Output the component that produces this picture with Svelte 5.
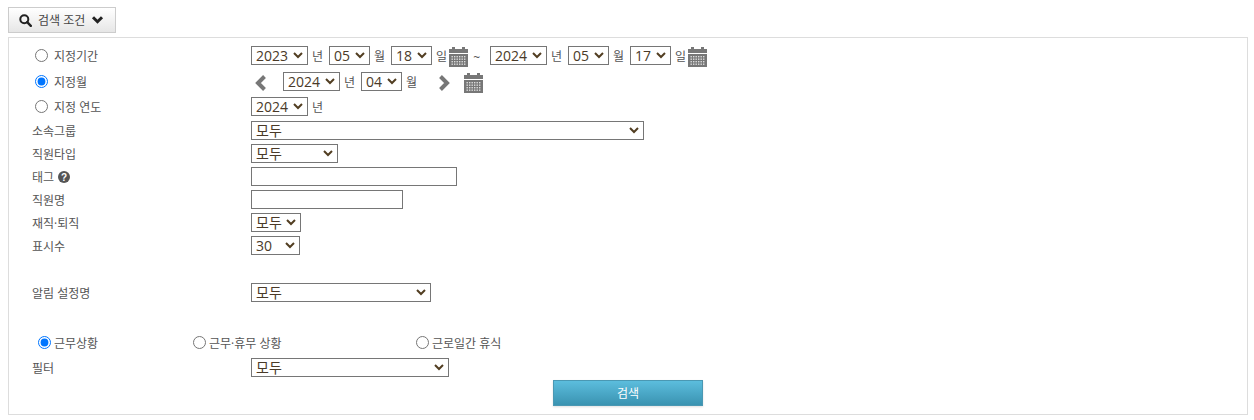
<script lang="ts">
  const years = ['2022', '2023', '2024'];
  const months = ['04', '05'];
  const filters = ['모두'];
</script>

{#snippet cal()}
  <svg class="cal" width="19" height="20" viewBox="0 0 19 20" aria-hidden="true">
    <path fill="#777" d="M0 2h3V0h3v2h7V0h3v2h3v4H0zM0 7h19v13H0z" />
    <g fill="#fff" opacity="0.75">
      {#each [9, 11.5, 14, 16.5] as y}
        {#each [2.5, 5, 7.5, 10, 12.5, 15] as x}
          <rect {x} {y} width="1.4" height="1.4" />
        {/each}
      {/each}
    </g>
  </svg>
{/snippet}

{#snippet dateSel(value: string, options: string[], cls: string)}
  <select class={cls}>
    {#each options as o}
      <option selected={o === value}>{o}</option>
    {/each}
  </select>
{/snippet}

<div class="page">
  <button class="toggle" type="button">
    <svg width="13" height="13" viewBox="0 0 13 13" aria-hidden="true">
      <circle cx="5.3" cy="5.3" r="4" fill="none" stroke="#222" stroke-width="2" />
      <path d="M8.2 8.2l3.6 3.6" stroke="#222" stroke-width="2.4" stroke-linecap="round" />
    </svg>
    <span>검색 조건</span>
    <svg width="13" height="10" viewBox="0 0 13 10" aria-hidden="true">
      <path d="M2 2.2l4.5 4.5L11 2.2" fill="none" stroke="#222" stroke-width="3" />
    </svg>
  </button>

  <form class="panel">
    <div class="row date first">
      <label class="label"><input type="radio" name="period" /><span>지정기간</span></label>
      <div class="ctl">
        {@render dateSel('2023', years, 'w57')}<span class="u">년</span>
        {@render dateSel('05', months, 'w41')}<span class="u">월</span>
        {@render dateSel('18', ['18'], 'w41')}<span class="u tight">일</span>
        {@render cal()}
        <span class="tilde">~</span>
        {@render dateSel('2024', years, 'w57')}<span class="u">년</span>
        {@render dateSel('05', months, 'w41')}<span class="u">월</span>
        {@render dateSel('17', ['17'], 'w41')}<span class="u tight">일</span>
        {@render cal()}
      </div>
    </div>

    <div class="row date second">
      <label class="label"><input type="radio" name="period" checked /><span>지정월</span></label>
      <div class="ctl">
        <svg class="prev" width="13" height="16" viewBox="0 0 13 16" aria-hidden="true">
          <path d="M10.5 1.5L4 8l6.5 6.5" fill="none" stroke="#777" stroke-width="4" />
        </svg>
        {@render dateSel('2024', years, 'w57')}<span class="u">년</span>
        {@render dateSel('04', months, 'w41')}<span class="u">월</span>
        <svg class="next" width="13" height="16" viewBox="0 0 13 16" aria-hidden="true">
          <path d="M2.5 1.5L9 8l-6.5 6.5" fill="none" stroke="#777" stroke-width="4" />
        </svg>
        {@render cal()}
      </div>
    </div>

    <div class="row date third">
      <label class="label"><input type="radio" name="period" /><span>지정 연도</span></label>
      <div class="ctl">
        {@render dateSel('2024', years, 'w57')}<span class="u">년</span>
      </div>
    </div>

    <div class="row">
      <span class="label plain">소속그룹</span>
      <div class="ctl">{@render dateSel('모두', filters, 'w393')}</div>
    </div>
    <div class="row">
      <span class="label plain">직원타입</span>
      <div class="ctl">{@render dateSel('모두', filters, 'w87')}</div>
    </div>
    <div class="row">
      <span class="label plain">
        태그
        <svg class="help" width="12" height="12" viewBox="0 0 12 12" aria-hidden="true">
          <circle cx="6" cy="6" r="6" fill="#555" />
          <text x="6" y="9.6" text-anchor="middle" class="q">?</text>
        </svg>
      </span>
      <div class="ctl"><input class="text w206" type="text" /></div>
    </div>
    <div class="row">
      <span class="label plain">직원명</span>
      <div class="ctl"><input class="text w152" type="text" /></div>
    </div>
    <div class="row">
      <span class="label plain">재직·퇴직</span>
      <div class="ctl">{@render dateSel('모두', filters, 'w50')}</div>
    </div>
    <div class="row">
      <span class="label plain">표시수</span>
      <div class="ctl">{@render dateSel('30', ['30'], 'w49')}</div>
    </div>

    <div class="row alarm">
      <span class="label plain">알림 설정명</span>
      <div class="ctl">{@render dateSel('모두', filters, 'w180')}</div>
    </div>

    <div class="row kinds">
      <label class="kind k1"><input type="radio" name="kind" checked /><span>근무상황</span></label>
      <label class="kind k2"><input type="radio" name="kind" /><span>근무·휴무 상황</span></label>
      <label class="kind"><input type="radio" name="kind" /><span>근로일간 휴식</span></label>
    </div>

    <div class="row filter">
      <span class="label plain">필터</span>
      <div class="ctl">{@render dateSel('모두', filters, 'w198')}</div>
    </div>

    <div class="actions">
      <button class="search" type="button">검색</button>
    </div>
  </form>
</div>

<style>
  :global(body) {
    margin: 0;
    background: #fff;
  }

  .page {
    padding: 7px 6px 0 8px;
    font-family: 'Open Sans', 'Noto Sans CJK KR', sans-serif;
    font-size: 12px;
    color: #555;
  }

  .toggle {
    display: flex;
    align-items: center;
    gap: 6px;
    box-sizing: border-box;
    width: 108px;
    height: 26px;
    padding: 0 0 0 10px;
    border: 1px solid #ccc;
    background: linear-gradient(#fff, #e6e6e6);
    font: inherit;
    color: #444;
  }

  .panel {
    box-sizing: border-box;
    height: 378px;
    margin-top: 4px;
    padding: 8px 0 0 23px;
    border: 1px solid #ddd;
    display: flex;
    flex-direction: column;
  }

  .row {
    display: flex;
    align-items: center;
    height: 19px;
    margin-bottom: 4px;
  }

  .row.first {
    margin-bottom: 7px;
  }

  .row.second {
    margin-bottom: 6px;
  }

  .row.third {
    margin-bottom: 5px;
  }

  .row.alarm {
    margin-top: 24px;
    margin-bottom: 31px;
  }

  .row.kinds {
    margin-bottom: 6px;
  }

  .label {
    width: 219px;
    flex: none;
    display: flex;
    align-items: center;
    box-sizing: border-box;
    padding-left: 3px;
    gap: 6px;
  }

  .label.plain {
    padding: 0;
    gap: 4px;
  }

  input[type='radio'] {
    width: 13px;
    height: 13px;
    margin: 0;
    flex: none;
  }

  .ctl {
    display: flex;
    align-items: center;
  }

  select {
    box-sizing: border-box;
    height: 19px;
    margin: 0;
    padding: 0 0 0 4px;
    border: 1px solid #767676;
    border-radius: 0;
    appearance: none;
    background: #fff url("data:image/svg+xml,%3Csvg xmlns='http://www.w3.org/2000/svg' width='10' height='7'%3E%3Cpath d='M1 1l4 4 4-4' fill='none' stroke='%23523e22' stroke-width='2'/%3E%3C/svg%3E") no-repeat right 4px center;
    font-family: 'Open Sans', 'Noto Sans CJK KR', sans-serif;
    font-size: 14px;
    line-height: 17px;
    color: #4a3a28;
  }

  .w57 { width: 57px; }
  .w41 { width: 41px; }
  .w393 { width: 393px; }
  .w87 { width: 87px; }
  .w50 { width: 50px; }
  .w49 { width: 49px; }
  .w180 { width: 180px; }
  .w198 { width: 198px; }

  .text {
    box-sizing: border-box;
    height: 19px;
    margin: 0;
    padding: 0 4px;
    border: 1px solid #767676;
  }

  .w206 { width: 206px; }
  .w152 { width: 152px; }

  .u {
    margin: 0 6px 0 4px;
    font-size: 12px;
  }

  .u.tight {
    margin-right: 2px;
  }

  .cal {
    margin-top: 3px;
    flex: none;
  }

  .tilde {
    margin: 3px 10px 0 5px;
  }

  .prev {
    margin: 3px 16px 0 3px;
  }

  .next {
    margin: 3px 13px 0 15px;
  }

  .help {
    flex: none;
  }

  .q {
    font: bold 10px 'Liberation Sans', sans-serif;
    fill: #fff;
  }

  .kind {
    display: flex;
    align-items: center;
    gap: 3px;
  }

  .kinds {
    padding-left: 6px;
  }

  .k1 {
    width: 155px;
  }

  .k2 {
    width: 223px;
  }

  .actions {
    display: flex;
    justify-content: center;
    padding-right: 0;
    margin-top: -1px;
    margin-left: -23px;
  }

  .search {
    box-sizing: border-box;
    width: 150px;
    height: 26px;
    border: 1px solid #4a98b3;
    background: linear-gradient(#5cbddd, #3a93b1);
    box-shadow: 0 1px 2px rgba(0, 0, 0, 0.12);
    font: inherit;
    color: #fff;
  }
</style>
